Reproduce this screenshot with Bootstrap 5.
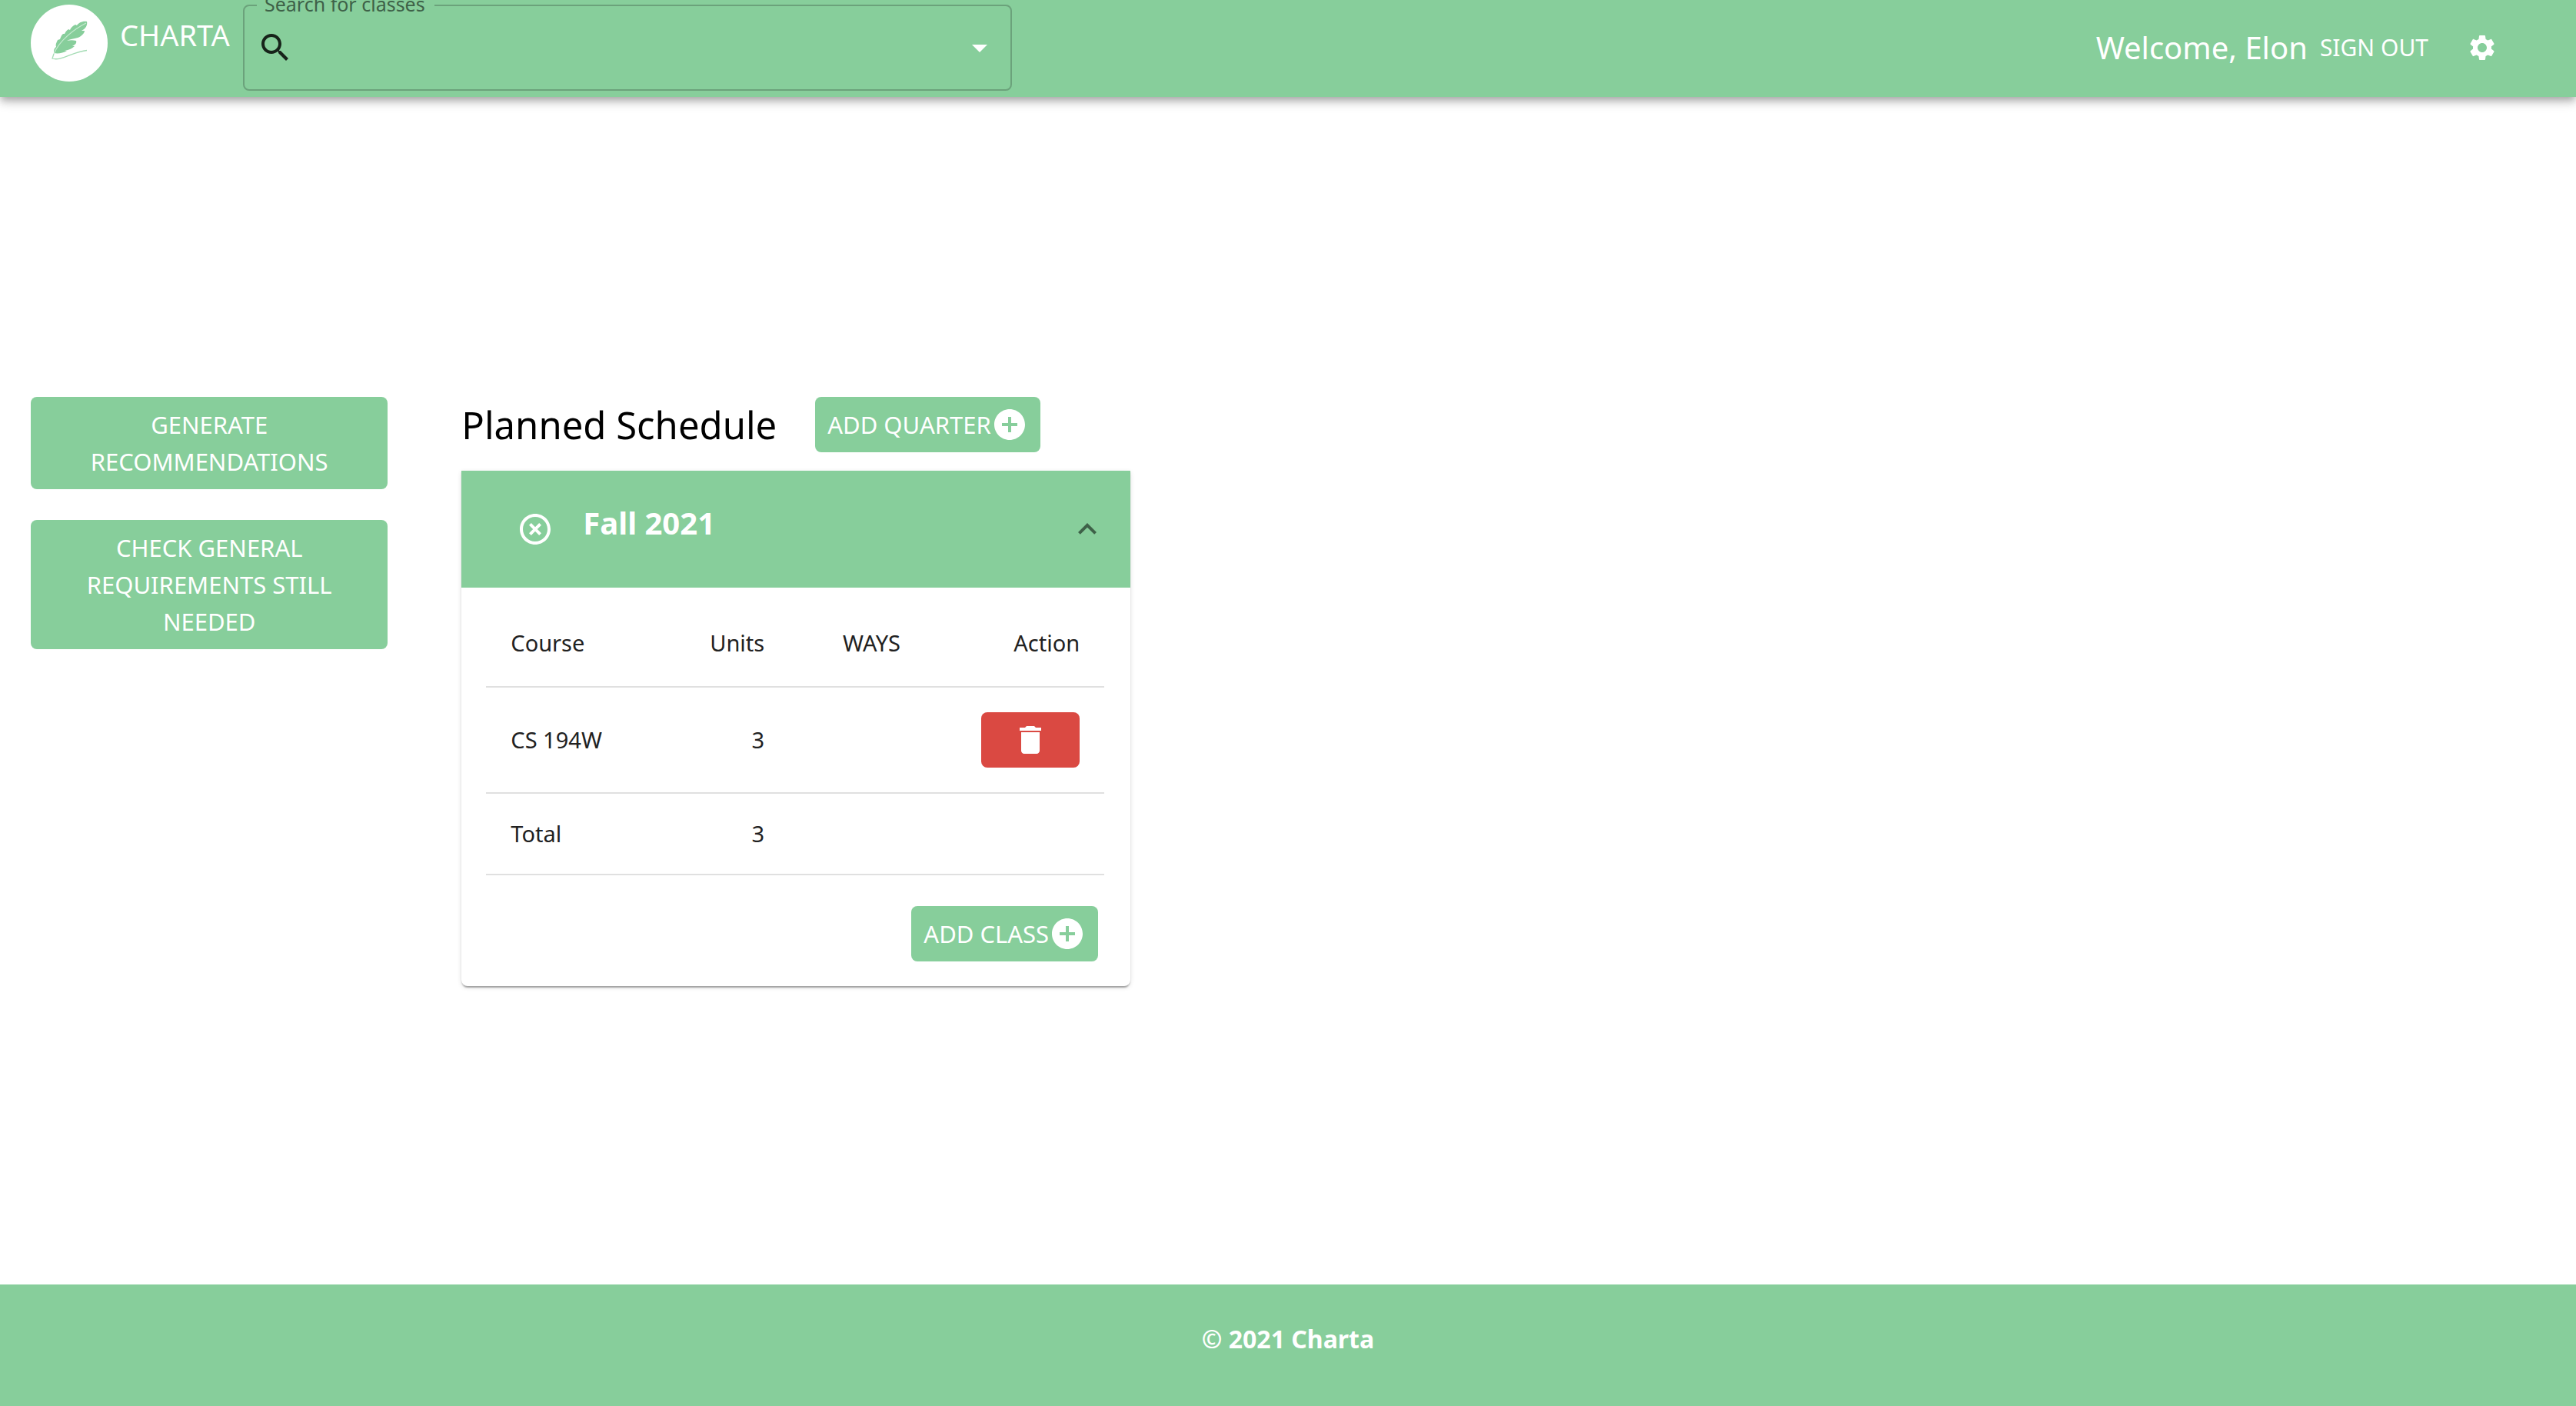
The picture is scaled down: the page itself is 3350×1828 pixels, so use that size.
<!DOCTYPE html>
<html lang="en">
<head>
<meta charset="utf-8">
<meta name="viewport" content="width=device-width, initial-scale=1">
<title>Charta</title>
<link rel="stylesheet" href="https://cdn.jsdelivr.net/npm/bootstrap@5.3.0/dist/css/bootstrap.min.css">
<style>
  :root { --leaf: #87ce9b; --ink: #212121; }
  body { font-family: "Noto Sans", "Open Sans", sans-serif; font-size: 29px; line-height: 48px; color: var(--ink); background: #fff; }
  svg { display: block; flex: none; fill: currentColor; }
  .icon-lg { width: 48px; height: 48px; }
  .icon-md { width: 40px; height: 40px; }
  .bg-leaf { background: var(--leaf); color: #fff; }
  .topbar { height: 126px; padding: 0 102px 0 40px; box-shadow: 0 4px 8px -2px rgba(0,0,0,.2), 0 8px 10px rgba(0,0,0,.14), 0 2px 20px rgba(0,0,0,.12); position: relative; z-index: 2; }
  .brand { padding-top: 6px; gap: 16px; color: #fff; font-size: 38px; line-height: 78px; width: 276px; }
  .brand svg { width: 100px; height: 100px; }
  .search-box { width: 1000px; height: 118px; border: 2px solid #6ba27b; border-radius: 8px; padding: 0 16px; }
  .search-box legend { float: none; width: auto; margin: 0; padding: 0 12px 4px 10px; font-size: 25px; line-height: 10px; color: #3e6148; }
  .search-row { height: 96px; color: #17231a; }
  .search-row input { background: transparent; border: 0; outline: 0; font-size: 32px; height: 64px; }
  .plain-btn { background: none; border: 0; padding: 0; color: #fff; }
  .account { padding-bottom: 2px; }
  .welcome { font-size: 40px; }
  .signout { font-size: 30px; margin: 0 50px 0 16px; }
  .page-main { padding: 390px 40px 80px; gap: 96px; }
  .side-col { width: 14.2%; gap: 40px; }
  .plan-col { width: 26.6%; }
  .act-btn { --bs-btn-font-size: 31px; --bs-btn-line-height: 48px; --bs-btn-padding-x: 16px; --bs-btn-padding-y: 12px; --bs-btn-border-width: 0; --bs-btn-border-radius: 8px; --bs-btn-color: #fff; --bs-btn-bg: var(--leaf); --bs-btn-hover-color: #fff; --bs-btn-hover-bg: #76bd8a; }
  .side-col .act-btn { --bs-btn-padding-x: 32px; }
  .trash-btn { --bs-btn-bg: #da4942; --bs-btn-hover-bg: #c23c36; width: 128px; }
  .plan-head { gap: 50px; margin-bottom: 24px; }
  .plan-head h1 { font-size: 49px; line-height: 72px; font-weight: 400; color: #000; margin: 0; }
  .quarter { border-radius: 0 0 8px 8px; background: #fff; box-shadow: 0 4px 2px -2px rgba(0,0,0,.2), 0 2px 2px rgba(0,0,0,.14), 0 2px 6px rgba(0,0,0,.12); }
  .quarter-head { height: 152px; padding: 0 32px 0 72px; gap: 38px; }
  .quarter-head h2 { font-size: 40px; line-height: 48px; font-weight: 700; margin: 0 0 16px; }
  .chev { color: #3e6148; }
  .quarter-body { padding: 16px 34px 32px 32px; }
  .course-table { margin: 0; table-layout: fixed; color: var(--ink); --bs-table-color: var(--ink); }
  .course-table th, .course-table td { padding: 32px; font-weight: 400; vertical-align: middle; border-bottom: 2px solid #e0e0e0; white-space: nowrap; }
  .course-table tfoot td { padding: 28px 32px; }
  .w-course { width: 32%; } .w-units { width: 17%; } .w-ways { width: 22%; } .w-action { width: 29%; }
  .add-row { margin: 40px 8px 0 0; }
  .site-foot { padding: 40px 0 56px; font-size: 32px; line-height: 62px; font-weight: 700; }
</style>
</head>
<body class="d-flex flex-column min-vh-100">
<header class="topbar bg-leaf d-flex align-items-start">
  <a href="#" class="brand d-flex text-decoration-none">
    <svg viewBox="0 0 100 100" aria-hidden="true">
      <circle cx="50" cy="50" r="50" fill="#fff"/>
      <path d="M73 22C67 21 62 24 60 27L58 26C54 28 52 30 51 33L49 32C46 34 45 36 44 38L42 38C39 41 39 43 38 45L35 46C33 50 32 52 33 55C30 57 30 60 30 63C36 64 42 63 47 60L44 60C50 59 54 57 57 54L54 54C58 52 60 50 59 47C55 46 51 46 47 47C55 43 60 45 65 41C68 39 70 36 70 34L66 34C72 31 74 26 73 22Z" fill="#87ce9b"/>
      <path d="M72 24C56 32 37 47 30 64" fill="none" stroke="#c6ead0" stroke-width="1.3"/>
      <path d="M30 64L28 70C39 74 55 61 73 59.5" fill="none" stroke="#a5dcb5" stroke-width="1.3"/>
    </svg>
    <span>CHARTA</span>
  </a>
  <fieldset class="search-box">
    <legend><label for="q" class="d-block">Search for classes</label></legend>
    <div class="search-row d-flex align-items-center">
      <svg class="icon-lg" viewBox="0 0 24 24" aria-hidden="true"><path d="M15.500 14h-.79l-.28-.27C15.410 12.590 16 11.110 16 9.500 16 5.910 13.090 3 9.500 3S3 5.910 3 9.500 5.910 16 9.500 16c1.610 0 3.090-.59 4.230-1.570l.27.28v.79l5 4.990L20.490 19l-4.990-5zm-6 0C7.010 14 5 11.990 5 9.500S7.010 5 9.500 5 14 7.010 14 9.500 11.990 14 9.500 14z"/></svg>
      <input id="q" type="text" class="flex-grow-1" autocomplete="off">
      <button type="button" class="plain-btn" aria-label="Open"><svg class="icon-lg" viewBox="0 0 24 24"><path d="M7 10l5 5 5-5z"/></svg></button>
    </div>
  </fieldset>
  <div class="account d-flex align-items-center ms-auto h-100">
    <span class="welcome">Welcome, Elon</span>
    <button type="button" class="plain-btn signout">SIGN OUT</button>
    <button type="button" class="plain-btn" aria-label="Settings"><svg class="icon-md" viewBox="0 0 24 24"><path d="M19.140 12.940c.04-.3.060-.61.060-.94 0-.32-.020-.64-.070-.94l2.030-1.580c.18-.14.230-.41.120-.61l-1.920-3.320c-.12-.22-.37-.29-.59-.22l-2.390.96c-.5-.38-1.030-.7-1.620-.94l-.36-2.540c-.04-.24-.24-.41-.48-.41h-3.840c-.24 0-.43.17-.47.41l-.36 2.540c-.59.24-1.130.57-1.620.94l-2.390-.96c-.22-.08-.47 0-.59.22L2.740 8.870c-.12.21-.08.47.12.61l2.030 1.580c-.05.3-.09.63-.09.94s.02.64.07.94l-2.030 1.580c-.18.14-.23.41-.12.610l1.920 3.320c.12.22.37.29.59.22l2.390-.96c.5.38 1.030.7 1.620.940l.36 2.540c.05.24.24.41.48.41h3.840c.24 0 .44-.17.47-.41l.36-2.540c.59-.24 1.130-.56 1.620-.94l2.390.96c.22.08.47 0 .59-.22l1.920-3.320c.12-.22.07-.47-.12-.61l-2.010-1.580zM12 15.600c-1.980 0-3.600-1.620-3.600-3.600s1.620-3.600 3.600-3.600 3.600 1.620 3.600 3.600-1.620 3.600-3.600 3.600z"/></svg></button>
  </div>
</header>

<main class="page-main d-flex align-items-start">
  <aside class="side-col d-flex flex-column">
    <button type="button" class="btn act-btn">GENERATE RECOMMENDATIONS</button>
    <button type="button" class="btn act-btn">CHECK GENERAL REQUIREMENTS STILL NEEDED</button>
  </aside>
  <section class="plan-col">
    <div class="plan-head d-flex align-items-center">
      <h1>Planned Schedule</h1>
      <button type="button" class="btn act-btn d-flex align-items-center text-nowrap">ADD QUARTER<svg class="icon-lg" viewBox="0 0 24 24" aria-hidden="true"><path d="M12 2C6.480 2 2 6.480 2 12s4.480 10 10 10 10-4.480 10-10S17.520 2 12 2zm5 11h-4v4h-2v-4H7v-2h4V7h2v4h4v2z"/></svg></button>
    </div>
    <article class="quarter">
      <div class="quarter-head bg-leaf d-flex align-items-center">
        <button type="button" class="plain-btn" aria-label="Remove quarter"><svg class="icon-lg" viewBox="0 0 24 24"><path d="M14.590 8L12 10.590 9.410 8 8 9.410 10.590 12 8 14.590 9.410 16 12 13.410 14.590 16 16 14.590 13.410 12 16 9.410 14.590 8zM12 2C6.470 2 2 6.470 2 12s4.470 10 10 10 10-4.470 10-10S17.530 2 12 2zm0 18c-4.410 0-8-3.590-8-8s3.590-8 8-8 8 3.590 8 8-3.590 8-8 8z"/></svg></button>
        <h2>Fall 2021</h2>
        <button type="button" class="plain-btn chev ms-auto" aria-label="Collapse"><svg class="icon-lg" viewBox="0 0 24 24"><path d="M12 8l-6 6 1.410 1.410L12 10.830l4.590 4.580L18 14z"/></svg></button>
      </div>
      <div class="quarter-body">
        <table class="table course-table">
          <thead><tr><th scope="col" class="w-course">Course</th><th scope="col" class="w-units text-end">Units</th><th scope="col" class="w-ways text-end">WAYS</th><th scope="col" class="w-action text-end">Action</th></tr></thead>
          <tbody><tr><td>CS 194W</td><td class="text-end">3</td><td></td><td><button type="button" class="btn act-btn trash-btn d-flex justify-content-center ms-auto" aria-label="Delete"><svg class="icon-lg" viewBox="0 0 24 24"><path d="M6 19c0 1.100.9 2 2 2h8c1.100 0 2-.9 2-2V7H6v12zM19 4h-3.500l-1-1h-5l-1 1H5v2h14V4z"/></svg></button></td></tr></tbody>
          <tfoot><tr><td>Total</td><td class="text-end">3</td><td></td><td></td></tr></tfoot>
        </table>
        <div class="add-row d-flex justify-content-end">
          <button type="button" class="btn act-btn d-flex align-items-center">ADD CLASS<svg class="icon-lg" viewBox="0 0 24 24" aria-hidden="true"><path d="M12 2C6.480 2 2 6.480 2 12s4.480 10 10 10 10-4.480 10-10S17.520 2 12 2zm5 11h-4v4h-2v-4H7v-2h4V7h2v4h4v2z"/></svg></button>
        </div>
      </div>
    </article>
  </section>
</main>

<footer class="site-foot bg-leaf text-center mt-auto">© 2021 Charta</footer>
<script src="https://cdn.jsdelivr.net/npm/bootstrap@5.3.0/dist/js/bootstrap.bundle.min.js"></script>
</body>
</html>
